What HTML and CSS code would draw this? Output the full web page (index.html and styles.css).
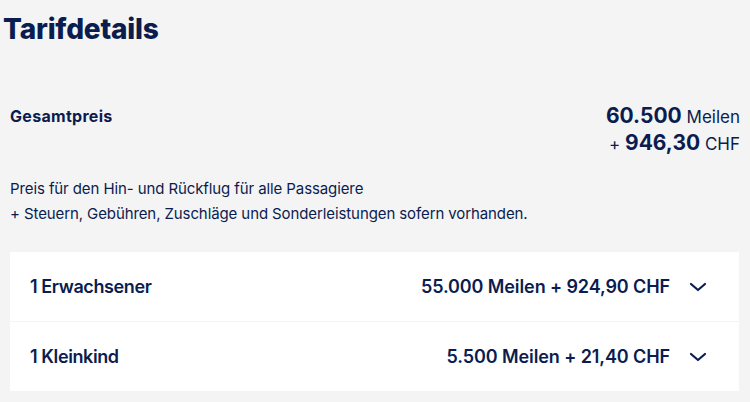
FILE: index.html
```html
<!DOCTYPE html>
<html lang="de">
<head>
    <meta charset="UTF-8">
    <meta name="viewport" content="width=device-width, initial-scale=1.0">
    <title>Tarifdetails</title>
    <link rel="stylesheet" href="styles.css">
</head>
<body>

<div class="fare">
    <h1 class="fare-title">Tarifdetails</h1>

    <div class="total">
        <div class="total-label">Gesamtpreis</div>
        <div class="total-price">
            <div><span class="amount">60.500</span> Meilen</div>
            <div>+ <span class="amount">946,30</span> CHF</div>
        </div>
    </div>

    <p class="note">
        Preis für den Hin- und Rückflug für alle Passagiere<br>
        + Steuern, Gebühren, Zuschläge und Sonderleistungen sofern vorhanden.
    </p>

    <div class="pax-list">
        <div class="pax-row">
            <span class="pax-name">1 Erwachsener</span>
            <span class="pax-price">55.000 Meilen + 924,90 CHF</span>
            <svg class="chevron" width="18" height="10" viewBox="0 0 18 10"><path d="M2 2l7 6 7-6" fill="none" stroke="#0b1c4f" stroke-width="2.2" stroke-linecap="round" stroke-linejoin="round"/></svg>
        </div>
        <div class="pax-row">
            <span class="pax-name">1 Kleinkind</span>
            <span class="pax-price">5.500 Meilen + 21,40 CHF</span>
            <svg class="chevron" width="18" height="10" viewBox="0 0 18 10"><path d="M2 2l7 6 7-6" fill="none" stroke="#0b1c4f" stroke-width="2.2" stroke-linecap="round" stroke-linejoin="round"/></svg>
        </div>
    </div>
</div>

</body>
</html>
```

FILE: styles.css
```css
body {
    margin: 0;
    background-color: #f4f4f4;
    font-family: Inter, "Liberation Sans", Arial, sans-serif;
    color: #0b1c4f;
}
.fare {
    padding: 0 10px;
}
.fare-title {
    margin: 0 0 0 -7px;
    padding-top: 12px;
    font-size: 28px;
    font-weight: 800;
    letter-spacing: -0.2px;
    line-height: 34px;
}
.total {
    display: flex;
    justify-content: space-between;
    margin-top: 57px;
}
.total-label {
    font-size: 16px;
    font-weight: 700;
    letter-spacing: 0.3px;
    padding-top: 3px;
}
.total-price {
    text-align: right;
    font-size: 17px;
    line-height: 25px;
}
.total-price .amount {
    font-size: 21px;
    font-weight: 700;
}
.note {
    margin: 19px 0 0;
    font-size: 15px;
    line-height: 25px;
    letter-spacing: -0.1px;
}
.pax-list {
    margin-top: 26px;
    margin-right: 1px;
    display: flex;
    flex-direction: column;
    gap: 1px;
}
.pax-row {
    display: flex;
    align-items: center;
    height: 69px;
    padding: 0 32px 0 20px;
    background-color: #ffffff;
    font-size: 18px;
    font-weight: 600;
}
.pax-name {
    flex: 1;
    letter-spacing: -0.4px;
}
.pax-price {
    letter-spacing: -0.1px;
}
.chevron {
    margin-left: 19px;
}
```
